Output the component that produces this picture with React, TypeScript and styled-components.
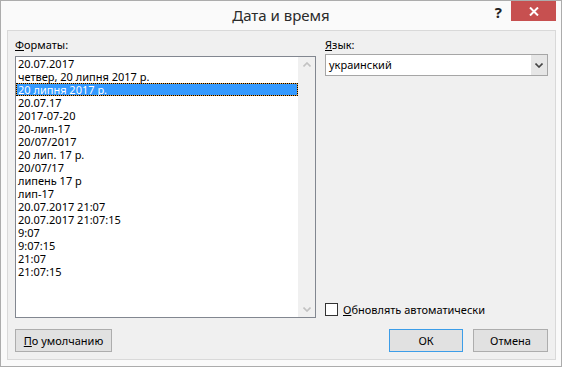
import React from "react";
import styled, { createGlobalStyle } from "styled-components";

const GlobalStyle = createGlobalStyle`
  html, body {
    margin: 0;
    padding: 0;
    background: #ffffff;
  }
  body {
    font-family: "Noto Sans", "Open Sans", sans-serif;
    font-size: 11px;
    color: #000000;
  }
`;

const Window = styled.div`
  width: 562px;
  height: 367px;
  box-sizing: border-box;
  border: 1px solid #acacac;
  background: #fafafa;
  display: flex;
  flex-direction: column;
`;

const TitleBar = styled.div`
  height: 29px;
  display: grid;
  grid-template-columns: 1fr auto 1fr;
  align-items: start;
`;

const Title = styled.div`
  grid-column: 2;
  font-size: 15px;
  line-height: 29px;
  color: #2b2b2b;
`;

const Controls = styled.div`
  grid-column: 3;
  display: flex;
  justify-content: flex-end;
  align-items: flex-start;
  padding-right: 5px;
`;

const HelpButton = styled.div`
  font-size: 15px;
  font-weight: bold;
  line-height: 22px;
  color: #222;
  margin-right: 9px;
`;

const CloseButton = styled.div`
  width: 45px;
  height: 20px;
  background: #c75050;
  display: flex;
  align-items: center;
  justify-content: center;
`;

const Panel = styled.div`
  flex: 1;
  margin: 0 5px 6px 6px;
  border: 1px solid #d9d9d9;
  background: #f0f0f0;
  padding: 6px 7px 0 7px;
  display: flex;
  flex-direction: column;
`;

const Columns = styled.div`
  display: grid;
  grid-template-columns: 301px 1fr;
  column-gap: 9px;
`;

const Column = styled.div`
  display: flex;
  flex-direction: column;
`;

const Label = styled.div<{ $gap: number }>`
  line-height: 15px;
  margin-bottom: ${(p) => p.$gap}px;
`;

const Key = styled.span`
  text-decoration: underline;
`;

const ListBox = styled.div`
  height: 262px;
  box-sizing: border-box;
  border: 1px solid #828790;
  background: #ffffff;
  display: flex;
`;

const Items = styled.div`
  flex: 1;
`;

const Item = styled.div<{ $selected?: boolean }>`
  height: 13px;
  line-height: 13px;
  padding-left: 2px;
  white-space: nowrap;
  color: ${(p) => (p.$selected ? "#ffffff" : "#000000")};
  background: ${(p) => (p.$selected ? "#3399ff" : "transparent")};
  box-shadow: ${(p) => (p.$selected ? "inset 0 0 0 1px #e8a040" : "none")};
  outline: ${(p) => (p.$selected ? "1px dotted #000" : "none")};
  outline-offset: -1px;
`;

const ScrollBar = styled.div`
  width: 17px;
  background: #f0f0f0;
  display: flex;
  flex-direction: column;
  justify-content: space-between;
  align-items: center;
  padding: 5px 0;
`;

const Combo = styled.div`
  height: 22px;
  box-sizing: border-box;
  border: 1px solid #a6a6a6;
  background: #ffffff;
  display: flex;
  align-items: stretch;
`;

const ComboText = styled.div`
  flex: 1;
  padding-left: 3px;
  line-height: 20px;
`;

const ComboButton = styled.div`
  width: 16px;
  background: #e6e6e6;
  display: flex;
  align-items: center;
  justify-content: center;
`;

const CheckRow = styled.label`
  margin-top: auto;
  margin-bottom: 1px;
  display: flex;
  align-items: center;
  gap: 5px;
  line-height: 15px;
`;

const CheckBox = styled.span`
  width: 13px;
  height: 13px;
  box-sizing: border-box;
  border: 1px solid #333333;
  background: #ffffff;
`;

const ButtonRow = styled.div`
  margin-top: 11px;
  display: flex;
  align-items: center;
`;

const Button = styled.div<{ $width: number; $primary?: boolean }>`
  width: ${(p) => p.$width}px;
  height: 23px;
  box-sizing: border-box;
  border: 1px solid ${(p) => (p.$primary ? "#3c9de8" : "#adadad")};
  background: #e1e1e1;
  display: flex;
  align-items: center;
  justify-content: center;
  line-height: 15px;
`;

const RightButtons = styled.div`
  margin-left: auto;
  display: flex;
  gap: 10px;
`;

const Chevron = ({ up, color }: { up?: boolean; color: string }) => (
  <svg width="8" height="5" viewBox="0 0 8 5">
    <path
      d={up ? "M0.5 4.5 L4 1 L7.5 4.5" : "M0.5 0.5 L4 4 L7.5 0.5"}
      fill="none"
      stroke={color}
      strokeWidth="1.6"
    />
  </svg>
);

const formats = [
  "20.07.2017",
  "четвер, 20 липня 2017 р.",
  "20 липня 2017 р.",
  "20.07.17",
  "2017-07-20",
  "20-лип-17",
  "20/07/2017",
  "20 лип. 17 р.",
  "20/07/17",
  "липень 17 р",
  "лип-17",
  "20.07.2017 21:07",
  "20.07.2017 21:07:15",
  "9:07",
  "9:07:15",
  "21:07",
  "21:07:15",
];

export default function App() {
  return (
    <>
      <GlobalStyle />
      <Window>
        <TitleBar>
          <Title>Дата и время</Title>
          <Controls>
            <HelpButton>?</HelpButton>
            <CloseButton>
              <svg width="10" height="9" viewBox="0 0 10 9">
                <path d="M1 0.5 L9 8.5 M9 0.5 L1 8.5" stroke="#ffffff" strokeWidth="2" />
              </svg>
            </CloseButton>
          </Controls>
        </TitleBar>
        <Panel>
          <Columns>
            <Column>
              <Label $gap={4}>
                <Key>Ф</Key>орматы:
              </Label>
              <ListBox>
                <Items>
                  {formats.map((f, i) => (
                    <Item key={f} $selected={i === 2}>
                      {f}
                    </Item>
                  ))}
                </Items>
                <ScrollBar>
                  <Chevron up color="#c2c2c2" />
                  <Chevron color="#c2c2c2" />
                </ScrollBar>
              </ListBox>
            </Column>
            <Column>
              <Label $gap={2}>
                <Key>Я</Key>зык:
              </Label>
              <Combo>
                <ComboText>украинский</ComboText>
                <ComboButton>
                  <Chevron color="#444444" />
                </ComboButton>
              </Combo>
              <CheckRow>
                <CheckBox />
                <span>
                  <Key>О</Key>бновлять автоматически
                </span>
              </CheckRow>
            </Column>
          </Columns>
          <ButtonRow>
            <Button $width={97}>
              <span>
                <Key>П</Key>о умолчанию
              </span>
            </Button>
            <RightButtons>
              <Button $width={74} $primary>
                ОК
              </Button>
              <Button $width={75}>Отмена</Button>
            </RightButtons>
          </ButtonRow>
        </Panel>
      </Window>
    </>
  );
}
